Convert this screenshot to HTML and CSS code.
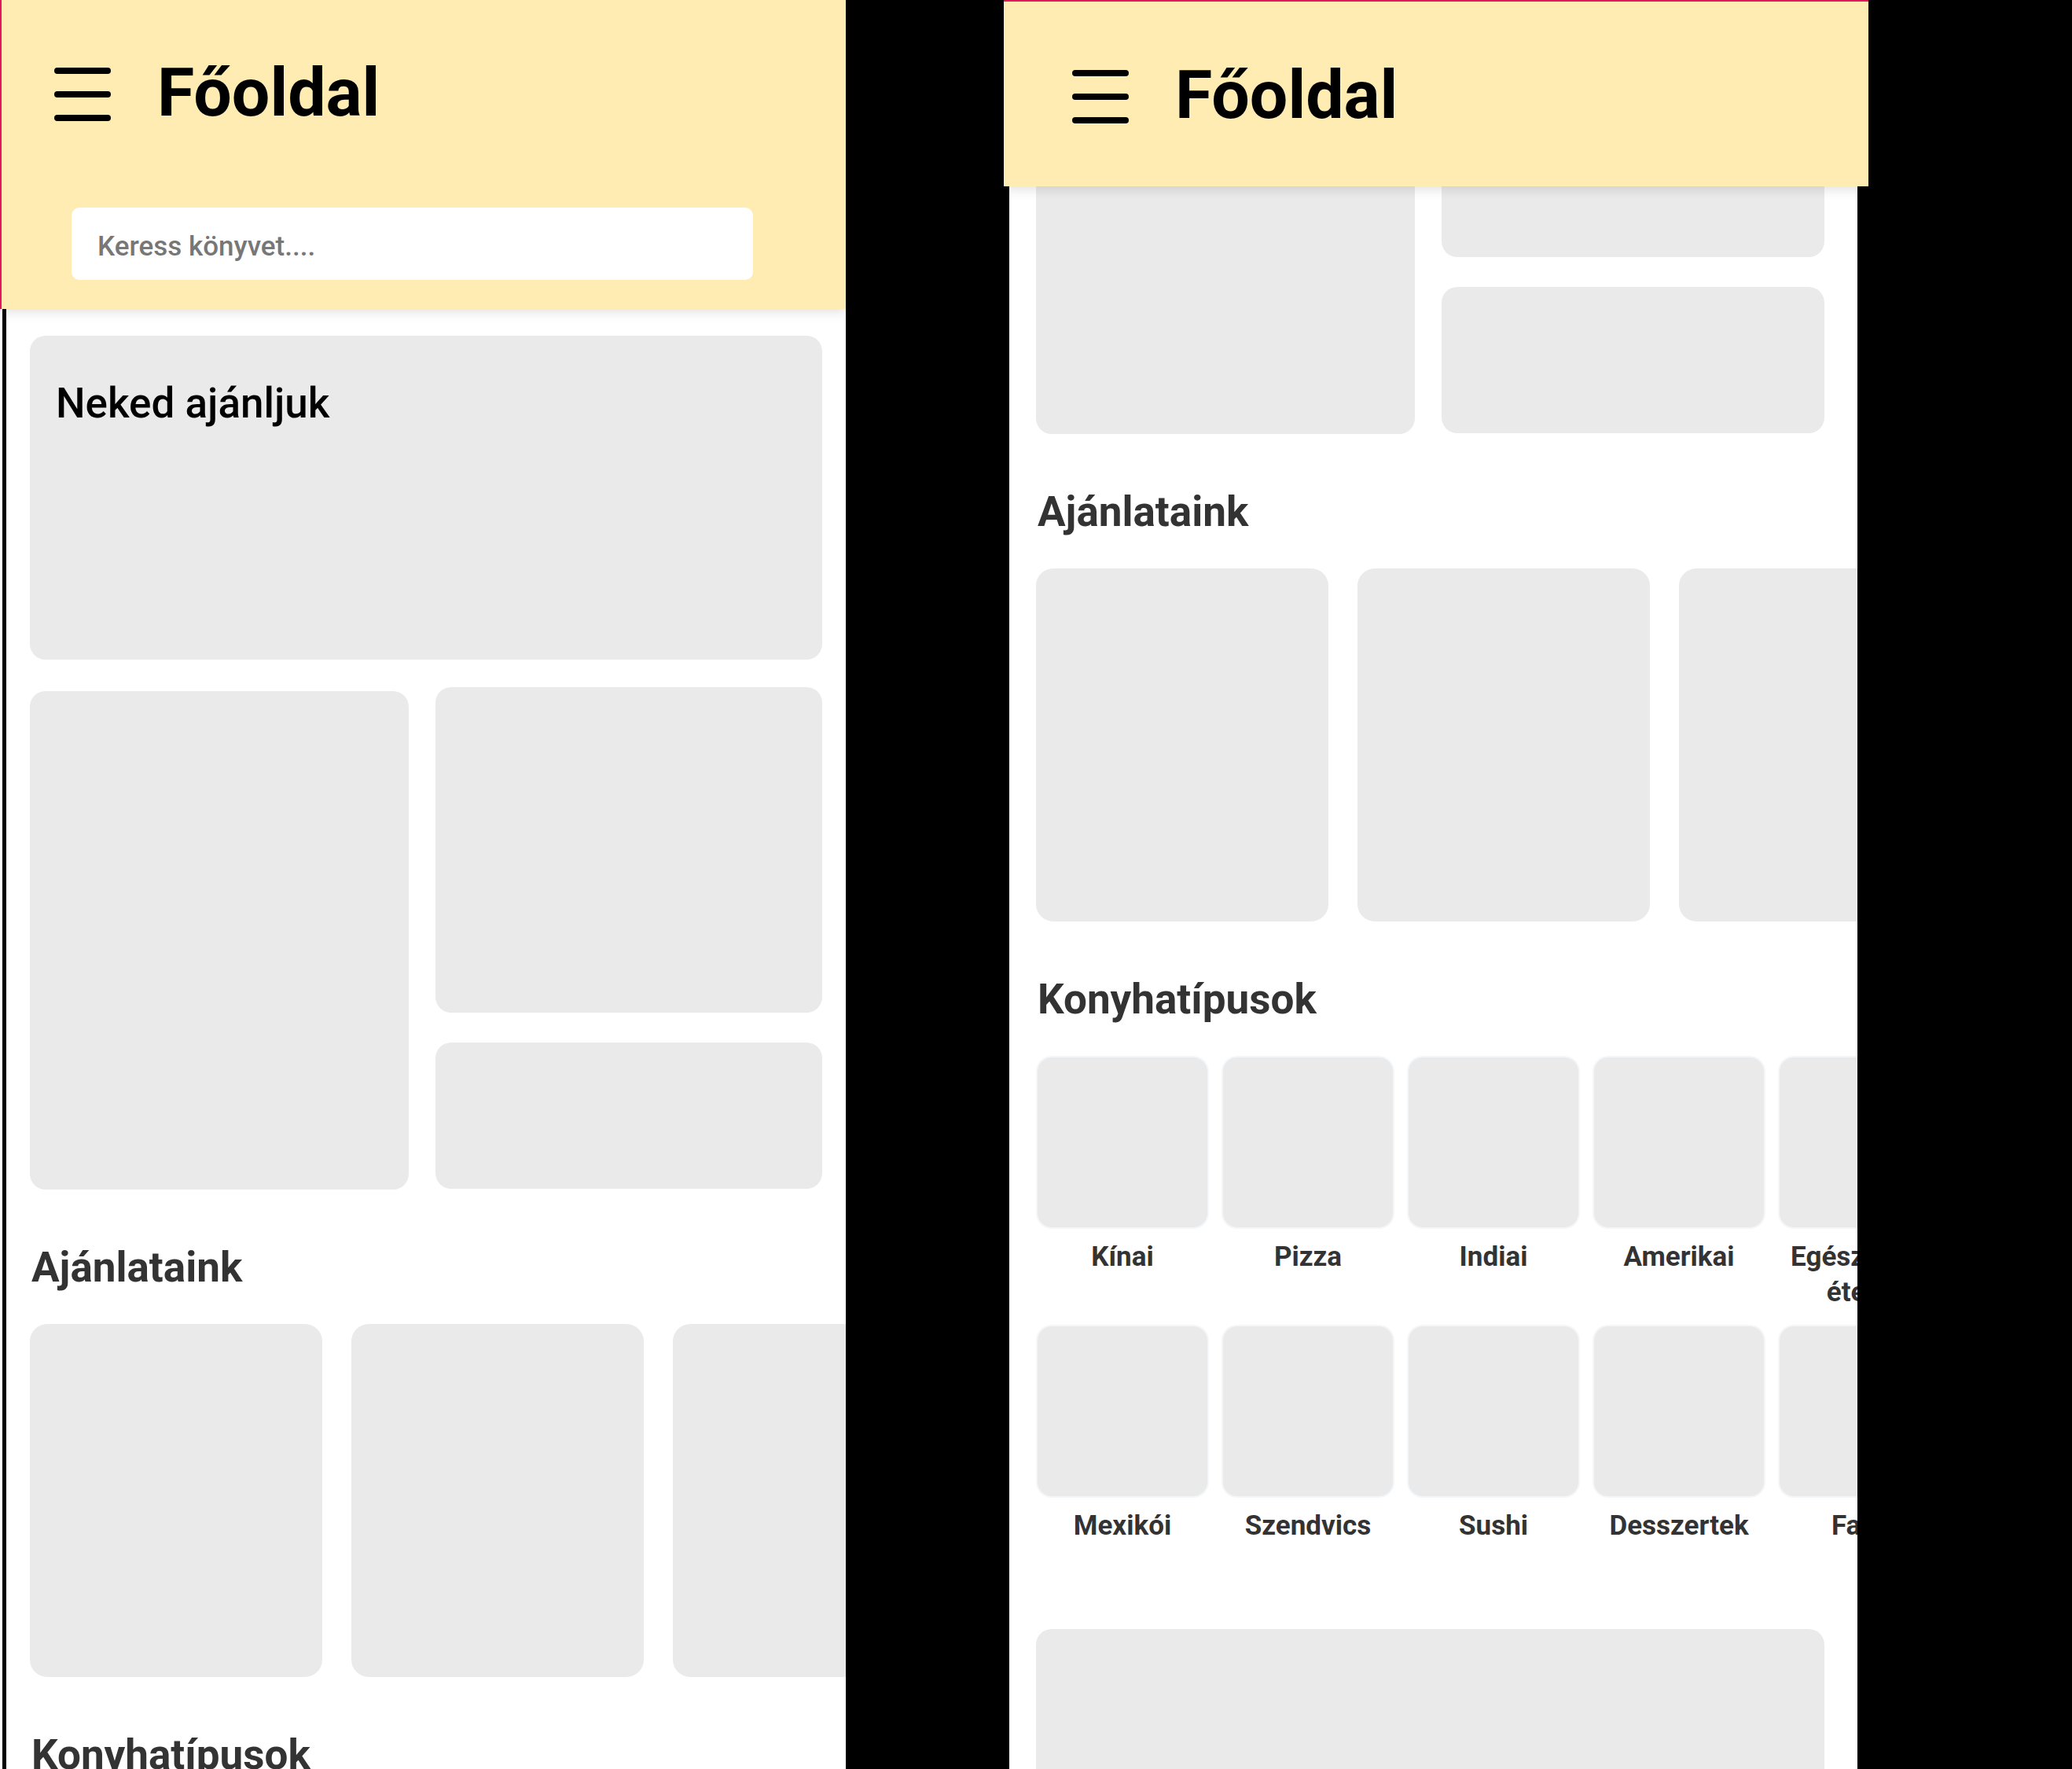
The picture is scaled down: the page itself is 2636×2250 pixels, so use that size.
FILE: index.html
```html
<!DOCTYPE html>
<html lang="hu">
<head>
    <meta charset="UTF-8">
    <meta name="viewport" content="width=device-width, initial-scale=1.0">
    <title>Főoldal</title>
    <link rel="stylesheet" href="styles.css">
</head>
<body>

    <div class="screens">

        <!-- első képernyő: az oldal teteje, kereső mezővel -->
        <div class="phone phone-full">
            <header class="topbar topbar-full">
                <div class="topbar-row">
                    <span class="menu-icon"><span></span><span></span><span></span></span>
                    <h1 class="page-title">Főoldal</h1>
                </div>
                <input class="search" type="text" placeholder="Keress könyvet....">
            </header>

            <main class="feed">
                <div class="feed-body">
                    <div class="card card-wide">
                        <h2>Neked ajánljuk</h2>
                    </div>

                    <div class="card-grid">
                        <div class="card card-tall"></div>
                        <div class="card-stack">
                            <div class="card card-medium"></div>
                            <div class="card card-small"></div>
                        </div>
                    </div>

                    <h3 class="section-title">Ajánlataink</h3>
                    <div class="carousel">
                        <div class="card offer"></div>
                        <div class="card offer"></div>
                        <div class="card offer"></div>
                    </div>

                    <h3 class="section-title">Konyhatípusok</h3>
                    <div class="cuisine-grid">
                        <div class="cuisine"><div class="cuisine-tile"></div><div class="cuisine-name">Kínai</div></div>
                        <div class="cuisine"><div class="cuisine-tile"></div><div class="cuisine-name">Mexikói</div></div>
                        <div class="cuisine"><div class="cuisine-tile"></div><div class="cuisine-name">Pizza</div></div>
                        <div class="cuisine"><div class="cuisine-tile"></div><div class="cuisine-name">Szendvics</div></div>
                        <div class="cuisine"><div class="cuisine-tile"></div><div class="cuisine-name">Indiai</div></div>
                        <div class="cuisine"><div class="cuisine-tile"></div><div class="cuisine-name">Sushi</div></div>
                        <div class="cuisine"><div class="cuisine-tile"></div><div class="cuisine-name">Amerikai</div></div>
                        <div class="cuisine"><div class="cuisine-tile"></div><div class="cuisine-name">Desszertek</div></div>
                        <div class="cuisine"><div class="cuisine-tile"></div><div class="cuisine-name">Egészséges ételek</div></div>
                        <div class="cuisine"><div class="cuisine-tile"></div><div class="cuisine-name">Fagyi</div></div>
                    </div>

                    <div class="card card-banner"></div>
                </div>
            </main>
        </div>

        <!-- második képernyő: ugyanaz az oldal legörgetve -->
        <div class="phone phone-scrolled">
            <header class="topbar topbar-compact">
                <div class="topbar-row">
                    <span class="menu-icon"><span></span><span></span><span></span></span>
                    <h1 class="page-title">Főoldal</h1>
                </div>
            </header>

            <main class="feed">
                <div class="feed-body">
                    <div class="card card-wide">
                        <h2>Neked ajánljuk</h2>
                    </div>

                    <div class="card-grid">
                        <div class="card card-tall"></div>
                        <div class="card-stack">
                            <div class="card card-medium"></div>
                            <div class="card card-small"></div>
                        </div>
                    </div>

                    <h3 class="section-title">Ajánlataink</h3>
                    <div class="carousel">
                        <div class="card offer"></div>
                        <div class="card offer"></div>
                        <div class="card offer"></div>
                    </div>

                    <h3 class="section-title">Konyhatípusok</h3>
                    <div class="cuisine-grid">
                        <div class="cuisine"><div class="cuisine-tile"></div><div class="cuisine-name">Kínai</div></div>
                        <div class="cuisine"><div class="cuisine-tile"></div><div class="cuisine-name">Mexikói</div></div>
                        <div class="cuisine"><div class="cuisine-tile"></div><div class="cuisine-name">Pizza</div></div>
                        <div class="cuisine"><div class="cuisine-tile"></div><div class="cuisine-name">Szendvics</div></div>
                        <div class="cuisine"><div class="cuisine-tile"></div><div class="cuisine-name">Indiai</div></div>
                        <div class="cuisine"><div class="cuisine-tile"></div><div class="cuisine-name">Sushi</div></div>
                        <div class="cuisine"><div class="cuisine-tile"></div><div class="cuisine-name">Amerikai</div></div>
                        <div class="cuisine"><div class="cuisine-tile"></div><div class="cuisine-name">Desszertek</div></div>
                        <div class="cuisine"><div class="cuisine-tile"></div><div class="cuisine-name">Egészséges ételek</div></div>
                        <div class="cuisine"><div class="cuisine-tile"></div><div class="cuisine-name">Fagyi</div></div>
                    </div>

                    <div class="card card-banner"></div>
                </div>
            </main>
        </div>

    </div>

</body>
</html>
```

FILE: styles.css
```css
* {
    box-sizing: border-box;
}

body {
    margin: 0;
    background-color: #000;
    font-family: Roboto, 'Noto Sans', sans-serif;
    overflow: hidden;
}

.screens {
    display: flex;
    align-items: flex-start;
    gap: 201px;
    height: 2250px;
}

.phone {
    position: relative;
    display: flex;
    flex-direction: column;
    height: 2250px;
    overflow: hidden;
}

.phone-full {
    width: 1076px;
    background-color: #fff;
}

.phone-scrolled {
    width: 1100px;
}

/* fejléc */
.topbar {
    position: relative;
    z-index: 1;
    flex-shrink: 0;
    background-color: #ffecb3;
    box-shadow: 0 4px 14px rgba(0, 0, 0, 0.12);
}

.topbar-full {
    height: 393px;
    border-left: 2px solid #e3175f;
    padding: 75px 0 0 67px;
}

.topbar-compact {
    position: absolute; /* a görgetett tartalom fölött marad */
    top: 0;
    left: 0;
    right: 0;
    height: 237px;
    border-top: 2px solid #e3175f;
    padding: 76px 0 0 87px;
}

.topbar-row {
    display: flex;
    align-items: center;
    height: 86px;
}

.menu-icon {
    display: flex;
    flex-direction: column;
    gap: 22px;
    width: 72px;
    margin-top: 4px;
}

.menu-icon span {
    height: 8px;
    border-radius: 4px;
    background-color: #000;
}

.page-title {
    margin: 0 0 0 59px;
    font-size: 86px;
    line-height: 86px;
    font-weight: 700;
    color: #000;
}

.search {
    display: block;
    width: 867px;
    height: 92px;
    margin: 103px 0 0 22px;
    padding: 6px 0 0 33px;
    border: none;
    border-radius: 10px;
    outline: none;
    background-color: #fff;
    font-family: Roboto, 'Noto Sans', sans-serif;
    font-size: 35px;
    font-weight: 500;
    color: #333;
}

.search::placeholder {
    color: #777;
}

/* tartalom */
.feed {
    flex: 1;
    background-color: #fff;
    overflow: hidden;
}

.phone-full .feed {
    margin-left: 3px;
    border-left: 5px solid #000;
}

.phone-scrolled .feed {
    width: 1079px;
    margin-left: 7px;
}

.feed-body {
    padding: 34px 30px 0 30px;
}

.phone-scrolled .feed-body {
    margin-top: -568px; /* görgetési pozíció */
    padding-left: 34px;
    padding-right: 42px;
}

.card {
    background-color: #eaeaea;
    border-radius: 20px;
}

.card-wide {
    height: 412px;
    padding: 55px 33px;
}

.card-wide h2 {
    margin: 0;
    font-size: 53px;
    line-height: 62px;
    font-weight: 500;
    color: #000;
}

.card-grid {
    display: grid;
    grid-template-columns: 482px 1fr;
    column-gap: 34px;
    align-items: start;
    margin-top: 35px;
}

.card-tall {
    height: 634px;
    margin-top: 5px;
}

.card-stack {
    display: flex;
    flex-direction: column;
    gap: 38px;
}

.card-medium {
    height: 414px;
}

.card-small {
    height: 186px;
}

.section-title {
    margin: 68px 0 0 2px;
    font-size: 53px;
    line-height: 62px;
    font-weight: 700;
    color: #333;
}

.carousel {
    display: flex;
    gap: 37px;
    margin-top: 41px;
}

.offer {
    flex-shrink: 0;
    width: 372px;
    height: 449px;
    border-radius: 22px;
}

.cuisine-grid {
    display: grid;
    grid-auto-flow: column;
    grid-template-rows: auto auto;
    grid-auto-columns: 216px;
    column-gap: 20px;
    row-gap: 21px;
    margin: 43px 0 0 2px;
}

.cuisine-tile {
    height: 216px;
    border-radius: 18px;
    background-color: #eaeaea;
    box-shadow: 0 0 0 2px rgba(210, 225, 235, 0.25);
}

.cuisine-name {
    margin-top: 15px;
    font-size: 35px;
    line-height: 45px;
    font-weight: 700;
    text-align: center;
    color: #333;
}

.card-banner {
    height: 480px;
    margin-top: 109px;
}
```
